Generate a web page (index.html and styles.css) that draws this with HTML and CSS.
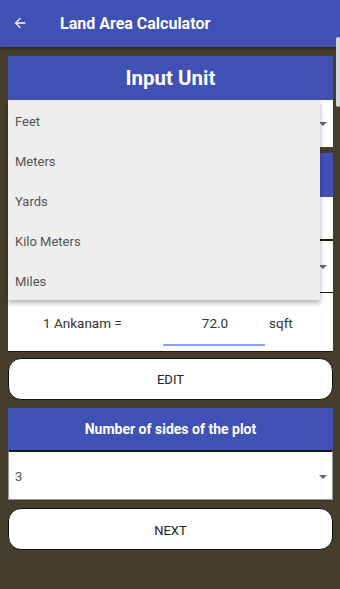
FILE: index.html
```html
<!DOCTYPE html>
<html>
<head>
<meta charset="utf-8">
<link rel="stylesheet" href="styles.css">
</head>
<body>
<div class="appbar">
  <svg class="back" width="16" height="16" viewBox="0 0 24 24"><path d="M20 11H7.83l5.59-5.59L12 4l-8 8 8 8 1.41-1.41L7.83 13H20v-2z" fill="#fff"/></svg>
  <span class="title">Land Area Calculator</span>
</div>
<div class="content">
  <div class="card">
    <div class="head big">Input Unit</div>
    <div class="spinner tall"><span class="val"></span><span class="caret"></span></div>
    <div class="sep"></div>
    <div class="head big"></div>
    <div class="field"></div>
    <div class="spinner mid"><span class="val"></span><span class="caret"></span></div>
    <div class="row">
      <span class="lbl">1 Ankanam =</span>
      <span class="num">72.0</span>
      <span class="unit">sqft</span>
    </div>
  </div>
  <button class="btn edit">EDIT</button>
  <div class="head small">Number of sides of the plot</div>
  <div class="spinner sides"><span class="val">3</span><span class="caret"></span></div>
  <button class="btn next">NEXT</button>
</div>
<div class="scrollthumb"></div>
<div class="popup">
  <div class="item">Feet</div>
  <div class="item">Meters</div>
  <div class="item">Yards</div>
  <div class="item">Kilo Meters</div>
  <div class="item">Miles</div>
</div>
</body>
</html>
```
FILE: styles.css
```css
html, body {
  margin: 0;
  padding: 0;
}
body {
  width: 340px;
  height: 589px;
  background: #463d2c;
  font-family: Roboto, "Noto Sans", sans-serif;
  position: relative;
  overflow: hidden;
}
.appbar {
  height: 47px;
  background: #3f51b5;
  display: flex;
  align-items: center;
  box-shadow: 0 2px 2px rgba(0,0,0,0.35);
}
.back {
  margin-left: 12px;
  margin-top: -2px;
}
.title {
  margin-left: 32px;
  color: #fff;
  font-weight: bold;
  font-size: 16px;
  margin-top: -1px;
}
.content {
  padding: 9px 7px 0 8px;
  display: flex;
  flex-direction: column;
}
.card {
  display: flex;
  flex-direction: column;
  background: #fff;
  border-bottom: 1px solid #1a1a10;
}
.head {
  background: #3f51b5;
  color: #fff;
  font-weight: bold;
  display: flex;
  align-items: center;
  justify-content: center;
}
.head.big {
  height: 44px;
  font-size: 20.5px;
}
.spinner {
  background: #fff;
  display: flex;
  align-items: center;
  justify-content: space-between;
  padding: 0 7px;
  color: #555;
  font-size: 13px;
}
.spinner.tall { height: 47px; }
.spinner.mid {
  height: 51px;
  border-top: 2px solid #1a1a10;
  border-bottom: 1px solid #1a1a10;
}
.spinner.sides {
  height: 50px;
  padding-top: 2px;
  box-sizing: border-box;
  border-top: 2px solid #1a1a10;
  border-bottom: 1px solid #999;
  border-right: 1px solid #999;
  border-left: 1px solid #999;
  padding-left: 6px;
  padding-right: 6px;
}
.caret {
  width: 0;
  height: 0;
  border-left: 4px solid transparent;
  border-right: 4px solid transparent;
  border-top: 4px solid #666;
  margin-right: -1px;
}
.sep {
  height: 6px;
  background: #463d2c;
}
.field {
  height: 42px;
}
.row {
  height: 58px;
  box-sizing: border-box;
  padding-top: 20px;
  display: flex;
  align-items: flex-start;
  font-size: 13.5px;
  line-height: 20px;
  color: #333;
}
.lbl {
  margin-left: 35px;
  width: 120px;
}
.num {
  width: 102px;
  box-sizing: border-box;
  text-align: center;
  padding-left: 2px;
  padding-bottom: 11px;
  border-bottom: 2px solid #8c9eff;
}
.unit {
  margin-left: 4px;
}
.btn {
  height: 42px;
  background: #fff;
  border: 1.5px solid #111;
  border-radius: 13px;
  font-family: Roboto, "Noto Sans", sans-serif;
  font-size: 13px;
  color: #222;
  padding: 0;
}
.btn.edit { margin-top: 6px; }
.btn.next { margin-top: 8px; height: 42px; padding-top: 2px; }
.head.small {
  margin-top: 8px;
  height: 42px;
  font-size: 14px;
}
.scrollthumb {
  position: absolute;
  right: 0;
  top: 37px;
  width: 4px;
  height: 70px;
  background: #d8d8d8;
  border-radius: 2px;
}
.popup {
  position: absolute;
  left: 8px;
  top: 100px;
  width: 312px;
  height: 200px;
  box-sizing: border-box;
  padding-top: 1px;
  background: #eeeeee;
  box-shadow: 0 3px 5px rgba(0,0,0,0.3);
  display: flex;
  flex-direction: column;
}
.item {
  height: 40px;
  flex: none;
  display: flex;
  align-items: center;
  padding-left: 7px;
  font-size: 13px;
  color: #555;
}
```
